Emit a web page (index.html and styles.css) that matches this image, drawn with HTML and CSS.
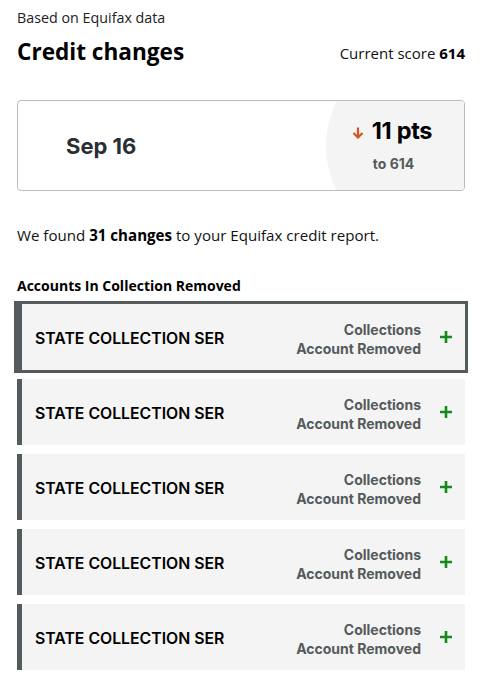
FILE: index.html
```html
<!DOCTYPE html>
<html lang="en">
<head>
<meta charset="utf-8">
<title>Credit changes</title>
<link rel="stylesheet" href="styles.css">
</head>
<body>
<main class="page">
  <p class="source">Based on Equifax data</p>
  <header class="head">
    <h1 class="title">Credit changes</h1>
    <p class="score">Current score <b>614</b></p>
  </header>

  <section class="card">
    <div class="date">Sep 16</div>
    <div class="delta">
      <div class="pts">
        <svg class="arrow" viewBox="0 0 12 12" width="12" height="12" aria-hidden="true">
          <path d="M6 0.5v10M1.5 6l4.5 4.5 4.5-4.5" fill="none" stroke="#d4541c" stroke-width="2.2"/>
        </svg>
        <span>11 pts</span>
      </div>
      <div class="to">to 614</div>
    </div>
  </section>

  <p class="found">We found <b>31 changes</b> to your Equifax credit report.</p>

  <h2 class="group">Accounts In Collection Removed</h2>
  <ul class="rows">
    <li class="row focused">
      <span class="name">STATE COLLECTION SER</span>
      <span class="status">Collections<br>Account Removed</span>
      <svg class="plus" viewBox="0 0 12 12" width="12" height="12" aria-hidden="true"><path d="M6 0v12M0 6h12" stroke="#158a1a" stroke-width="2.6"/></svg>
    </li>
    <li class="row">
      <span class="name">STATE COLLECTION SER</span>
      <span class="status">Collections<br>Account Removed</span>
      <svg class="plus" viewBox="0 0 12 12" width="12" height="12" aria-hidden="true"><path d="M6 0v12M0 6h12" stroke="#158a1a" stroke-width="2.6"/></svg>
    </li>
    <li class="row">
      <span class="name">STATE COLLECTION SER</span>
      <span class="status">Collections<br>Account Removed</span>
      <svg class="plus" viewBox="0 0 12 12" width="12" height="12" aria-hidden="true"><path d="M6 0v12M0 6h12" stroke="#158a1a" stroke-width="2.6"/></svg>
    </li>
    <li class="row">
      <span class="name">STATE COLLECTION SER</span>
      <span class="status">Collections<br>Account Removed</span>
      <svg class="plus" viewBox="0 0 12 12" width="12" height="12" aria-hidden="true"><path d="M6 0v12M0 6h12" stroke="#158a1a" stroke-width="2.6"/></svg>
    </li>
    <li class="row">
      <span class="name">STATE COLLECTION SER</span>
      <span class="status">Collections<br>Account Removed</span>
      <svg class="plus" viewBox="0 0 12 12" width="12" height="12" aria-hidden="true"><path d="M6 0v12M0 6h12" stroke="#158a1a" stroke-width="2.6"/></svg>
    </li>
  </ul>
</main>
</body>
</html>
```

FILE: styles.css
```css
* { box-sizing: border-box; }
html, body { margin: 0; padding: 0; background: #fff; }
body {
  font-family: "Open Sans", "Liberation Sans", sans-serif;
  color: #1a1a1a;
}
.page { padding: 8px 22px 0 17px; width: 487px; }
.source { margin: 0; font-size: 14.3px; line-height: 20px; color: #222; }
.head {
  display: flex; justify-content: space-between; align-items: center;
  margin-top: 12px; height: 26px;
}
.title { margin: 0; font-size: 22.6px; font-weight: 700; color: #000; line-height: 26px; margin-top: -2px; }
.score { margin: 0; font-size: 15px; color: #111; }
.score b { font-weight: 700; color: #000; }

.card {
  margin-top: 34px; height: 91px;
  border: 1px solid #b9bdbf; border-radius: 4px;
  display: flex; align-items: center; position: relative; overflow: hidden; z-index: 0;
}
.date {
  flex: 1; padding-left: 48px;
  font-family: Inter, sans-serif; font-weight: 700; font-size: 22px; color: #2b2f31;
}
.delta {
  width: 138px; height: 100%;
  display: flex; flex-direction: column; align-items: center; justify-content: center;
  position: relative;
}
.delta::before {
  content: ""; position: absolute; left: 0; top: 50%;
  width: 196px; height: 196px; margin-top: -98px; border-radius: 50%;
  background: #f3f4f3; z-index: -1;
}
.pts {
  display: flex; align-items: center; gap: 8px;
  font-family: Inter, sans-serif; font-weight: 700; font-size: 23.5px; color: #000;
  line-height: 28px; margin-top: -2px; margin-left: -6px; letter-spacing: -0.3px;
}
.arrow { margin-top: 4px; }
.to {
  font-family: Inter, sans-serif; font-weight: 700; font-size: 14px; color: #555a5c;
  margin-top: 10px; margin-left: -3px;
}

.found { margin: 34px 0 0; font-size: 15.1px; line-height: 20px; color: #111; }
.found b { font-weight: 700; color: #000; }

.group { margin: 31px 0 0; font-size: 14px; font-weight: 700; line-height: 20px; color: #000; }

.rows { list-style: none; margin: 8px 0 0; padding: 0; display: flex; flex-direction: column; gap: 9px; }
.row {
  height: 66px; background: #f3f4f3; border-left: 5px solid #555a5c;
  display: flex; align-items: center; padding: 0 13px 0 13px;
}
.row.focused { outline: 3px solid #555a5c; }
.name { flex: 1; font-family: Inter, sans-serif; font-size: 15.8px; font-weight: 600; color: #000; margin-top: 3px; }
.status {
  text-align: right; font-family: Inter, sans-serif; font-size: 14px; font-weight: 700; color: #555a5c; line-height: 19px;
  margin-top: 4px;
}
.plus { flex: none; margin-left: 19px; }
```
